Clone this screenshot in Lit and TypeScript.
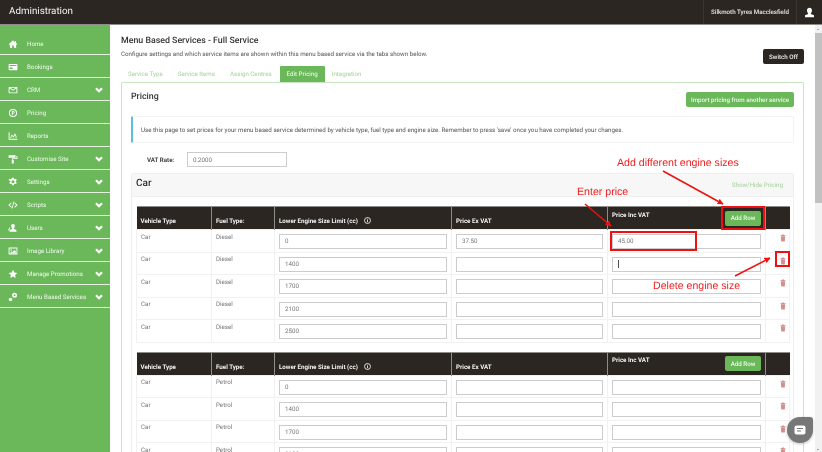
import { LitElement, html, css, svg } from "lit";
import { customElement } from "lit/decorators.js";

const icons: Record<string, unknown> = {
  home: svg`<path d="M8 2 1 8.200l.9 1L3 8.300V14h3.600v-3.600h2.800V14H13V8.300l1.100.9.9-1-2.400-2.100V3h-1.800v2.500z"/>`,
  card: svg`<path fill-rule="evenodd" d="M2 3h12a1 1 0 0 1 1 1v8a1 1 0 0 1-1 1H2a1 1 0 0 1-1-1V4a1 1 0 0 1 1-1zm.5 1.700v1.600h11V4.700zm0 4.200v2.400h5V8.900z"/>`,
  mail: svg`<path fill-rule="evenodd" d="M2 3h12a1 1 0 0 1 1 1v8a1 1 0 0 1-1 1H2a1 1 0 0 1-1-1V4a1 1 0 0 1 1-1zm.5 2v7h11V5L8 9.200zM4 4.500 8 7.600l4-3.100z"/>`,
  pricing: svg`<path fill-rule="evenodd" d="M8 1.500a6.500 6.500 0 1 1 0 13 6.500 6.500 0 0 1 0-13zm0 1.600a4.900 4.900 0 1 0 0 9.800 4.900 4.900 0 0 0 0-9.800z"/><path d="M6.200 11.500V4.800h2.300a2 2 0 0 1 0 4.200H7.600v2.500zM7.600 6v1.800h.8a.9.9 0 0 0 0-1.800z"/>`,
  chart: svg`<path d="M1 2h1.500v10.500H15V14H1z"/><path d="M3.500 11 6 5.500l2.500 3L11 3.500l2.500 4.500v3h-1.300V8.800L11 6.500 9 10.800 6.200 8 4.800 11z"/>`,
  roller: svg`<path d="M1 2h11v4H1zM13 3.400h2v4.400H8V9.500h1.200V15H6V9.500h.6V6.600h7V4.800H13z"/>`,
  cog: svg`<path fill-rule="evenodd" d="M6.700 1h2.600l.4 2 1.200.6 1.900-.9 1.300 2.200-1.600 1.300v1.600l1.600 1.300-1.300 2.200-1.900-.9-1.200.7-.4 1.900H6.700l-.4-2-1.200-.6-1.900.9-1.300-2.200 1.600-1.300V6.200L.9 4.900l1.300-2.200 1.900.9 1.200-.7zM8 5.300a2.400 2.400 0 1 0 0 4.800 2.400 2.400 0 0 0 0-4.800z"/>`,
  code: svg`<path d="M5 3.800 6 5 2.800 8 6 11l-1 1.200L.5 8zM11 3.800 10 5l3.200 3L10 11l1 1.200L15.500 8zM9 2.500h1.300L7 13.500H5.700z"/>`,
  users: svg`<path d="M8 1.500c1.800 0 3 1.300 3 3.300 0 1.500-.6 2.700-1.500 3.400v1.200l4 1.600V14H2.500v-3l4-1.600V8.200C5.600 7.500 5 6.300 5 4.800c0-2 1.200-3.300 3-3.300z"/><path d="M1 13.200V11l2.500-1.200C3 8.500 2.800 7.500 3.200 6.500 2.200 7 1.500 8 1.500 9L.5 10v3.200z"/>`,
  image: svg`<path fill-rule="evenodd" d="M1 2.500h14v11H1zm1.400 1.400v7.800h11.200V3.900z"/><path d="M5 5a1.300 1.300 0 1 1 0 2.600A1.300 1.300 0 0 1 5 5zM3.300 10.800 6 8.500l1.300 1 3-3.200 2.400 2.500v2z"/>`,
  star: svg`<path d="m8 1.200 2.100 4.500 4.900.6-3.600 3.300.9 4.800L8 12.100l-4.300 2.300.9-4.800L1 6.300l4.900-.6z"/>`,
  key: svg`<path fill-rule="evenodd" d="M10.500 1a4 4 0 1 1 0 8 4 4 0 0 1 0-8zm0 2.500a1.500 1.500 0 1 0 0 3 1.500 1.500 0 0 0 0-3z"/><circle cx="4" cy="12" r="2.800"/>`,
};

const nav: [string, string, boolean][] = [
  ["home", "Home", false],
  ["card", "Bookings", false],
  ["mail", "CRM", true],
  ["pricing", "Pricing", false],
  ["chart", "Reports", false],
  ["roller", "Customise Site", true],
  ["cog", "Settings", true],
  ["code", "Scripts", true],
  ["users", "Users", true],
  ["image", "Image Library", true],
  ["star", "Manage Promotions", true],
  ["key", "Menu Based Services", true],
];

const tabs = ["Service Type", "Service Items", "Assign Centres", "Edit Pricing", "Integration"];

type Row = { size: string; ex?: string; inc?: string; caret?: boolean };

const dieselRows: Row[] = [
  { size: "0", ex: "37.50", inc: "45.00" },
  { size: "1400", caret: true },
  { size: "1700" },
  { size: "2100" },
  { size: "2500" },
];
const petrolRows: Row[] = [{ size: "0" }, { size: "1400" }, { size: "1700" }, { size: "2100" }];

const trash = html`<svg class="trash" viewBox="0 0 14 16" aria-hidden="true"><path d="M5 0h4l.6 1.500H13V3.200H1V1.500h3.400zM2 4.200h10l-.7 10.600a1.200 1.200 0 0 1-1.200 1.200H3.900a1.200 1.200 0 0 1-1.200-1.200z"/></svg>`;

@customElement("app-root")
export class AppRoot extends LitElement {
  static styles = css`
    :host { display: block; width: 822px; height: 452px; overflow: hidden; position: relative; background: #fff;
      font-family: Roboto, "Liberation Sans", sans-serif; font-size: 6.200px; color: #666; text-rendering: geometricPrecision; filter: blur(.3px); }
    * { box-sizing: border-box; }
    button { text-rendering: geometricPrecision; white-space: nowrap; }
    .top { height: 25px; background: #2b2622; border-bottom: 1px solid #8f8d8a; display: flex; align-items: stretch; color: #fff; }
    .brand { flex: 1; padding: 0 0 0 9px; font-size: 9.800px; line-height: 24px; color: #f2f2f2; }
    .centre { display: flex; align-items: center; padding: 0 7px; font-size: 6.200px; font-weight: 500; border-left: 1px solid #3a3531; border-right: 1px solid #3a3531; color: #e8e8e8; }
    .user { width: 25px; display: flex; align-items: center; justify-content: center; }
    .user svg { width: 11px; height: 11px; fill: #fff; }
    .body { display: flex; height: 427px; }
    .side { width: 110px; flex: none; background: #6ab85a; padding-top: 7px; color: #fff; }
    .item { height: 23px; border-bottom: 1px solid #e4f3e0; display: flex; align-items: center; padding: 1px 7px 0 8px; font-size: 6.200px; color: #eef8eb; }
    .item .ic { width: 10px; height: 10px; fill: #fff; flex: none; margin-right: 9px; }
    .item span { flex: 1; white-space: nowrap; }
    .item .chev { width: 8px; height: 6px; fill: none; stroke: #fff; stroke-width: 2.200; flex: none; }
    .main { flex: 1; min-width: 0; overflow: hidden; padding: 10px 0 0 11px; }
    .head { display: flex; align-items: flex-end; justify-content: space-between; }
    h1 { margin: 0; font-size: 8.800px; font-weight: 500; color: #333; line-height: 12px; }
    .desc { margin: 2px 0 0; font-size: 6.200px; line-height: 10px; color: #555; white-space: nowrap; }
    .switch { background: #2b2622; color: #f0f0f0; border: 0; border-radius: 2px; width: 41px; height: 15px; font: 500 6.200px Roboto, sans-serif; padding: 0; margin: 0 11px 0 0; position: relative; top: 5px; }
    .tabs { display: flex; margin-top: 7px; height: 16px; }
    .tab { padding: 0 7px; line-height: 16px; font-size: 6.200px; color: #a3d39a; margin-right: 1px; white-space: nowrap; }
    .tab.on { background: #6ab85a; color: #f4fbf2; border-radius: 1px 1px 0 0; margin-right: 0; }
    .panel { width: 683px; border: 1px solid #c9e6c2; border-radius: 1px; padding: 9px 9px 0 9px; height: 400px; }
    .ptop { display: flex; justify-content: space-between; align-items: flex-start; }
    h2 { margin: 0; font-size: 8.800px; font-weight: 500; color: #333; line-height: 10px; }
    .import { background: #6ab85a; color: #eef8eb; border: 0; border-radius: 2px; width: 108px; height: 15px; font: 500 6.200px Roboto, sans-serif; padding: 0; }
    .info { margin-top: 9px; height: 27px; border: 1px solid #f3f3f3; border-left: 2px solid #5bc0de; border-radius: 1px; padding-left: 8px; display: flex; align-items: center; font-size: 6.200px; color: #555; white-space: nowrap; }
    .vat { display: flex; align-items: center; margin-top: 9px; padding-left: 16px; }
    .vat label { width: 40px; font-weight: 700; font-size: 6.200px; color: #444; }
    .in { height: 15px; border: 1px solid #ccc; display: flex; align-items: center; padding-left: 5px; font-size: 6.200px; color: #777; background: #fff; }
    .vat .in { width: 100px; }
    .card { margin-top: 6px; border: 1px solid #eee; border-radius: 2px; }
    .chead { height: 23px; background: #f7f7f7; border-bottom: 1px solid #eee; display: flex; align-items: center; justify-content: space-between; padding: 0 10px 0 4px; }
    .chead b { font-size: 10px; font-weight: 500; color: #333; position: relative; top: -2px; }
    .chead a { font-size: 6.200px; color: #a3d39a; }
    .cbody { padding: 9px 4px 0 4px; }
    table { width: 653px; border-collapse: collapse; table-layout: fixed; margin-bottom: 9px; }
    th { background: #2b2622; color: #f2f2f2; height: 23px; font-size: 6.200px; font-weight: 700; text-align: left; vertical-align: bottom; padding: 0 4px 3px; border-left: 1px solid #8f8d8a; border-top: 1px solid #8f8d8a; line-height: 9px; white-space: nowrap; }
    th:first-child { border-left: 0; }
    th.rowh { padding: 0 4px; vertical-align: middle; }
    .incwrap { display: flex; align-items: center; justify-content: space-between; }
    .incwrap span { position: relative; top: -3px; }
    .add { background: #6ab85a; color: #eef8eb; border: 0; border-radius: 2px; width: 36px; height: 15px; font: 500 6.200px Roboto, sans-serif; padding: 0; }
    .i { display: inline-block; width: 7px; height: 7px; margin-left: 6px; vertical-align: -1px; fill: none; stroke: #f2f2f2; stroke-width: 1; }
    td { height: 22.500px; padding: 4px 4px 2.500px; vertical-align: top; border: 1px solid #f1f1f1; font-size: 6.200px; line-height: 9px; color: #777; }
    td.txt { padding-top: 2.500px; }
    td.ctr { padding: 4px 0 0 14px; }
    td .in { width: 100%; }
    .trash { width: 6px; height: 8px; fill: #d28f8f; display: block; }
    .caret { width: 1px; height: 8px; background: #555; }
    .scroll { width: 7px; flex: none; background: #f1f1f1; position: relative; }
    .scroll i { position: absolute; left: 0; right: 0; top: 8px; height: 170px; background: #c1c1c1; }
    .scroll u { position: absolute; left: 2px; top: 3px; border: 1.500px solid transparent; border-bottom-color: #777; }
    .scroll s { position: absolute; left: 2px; bottom: 1px; border: 1.500px solid transparent; border-top-color: #555; }
    .mark { position: absolute; border: 2px solid #ee1111; }
    .note { position: absolute; color: #f01c1c; font-family: "Liberation Sans", Arial, sans-serif; font-size: 10.600px; white-space: nowrap; line-height: 12px; }
    .arrows { position: absolute; left: 0; top: 0; width: 822px; height: 452px; pointer-events: none; }
    .chat { position: absolute; left: 787px; top: 417px; width: 26px; height: 26px; background: #777; border-radius: 50% 3px 50% 50%; display: flex; align-items: center; justify-content: center; box-shadow: 0 1px 3px rgba(0,0,0,.25); }
    .chat svg { width: 12px; height: 10px; }
  `;

  private table(fuel: string, rows: Row[]) {
    return html`<table>
      <colgroup><col style="width:75px" /><col style="width:63px" /><col style="width:177px" /><col style="width:156px" /><col style="width:158px" /><col style="width:24px" /></colgroup>
      <thead><tr>
        <th>Vehicle Type</th>
        <th>Fuel Type:</th>
        <th>Lower Engine Size Limit (cc)<svg class="i" viewBox="0 0 8 8"><circle cx="4" cy="4" r="3.400" /><path d="M4 3.500v2.500M4 2v1" /></svg></th>
        <th>Price Ex VAT</th>
        <th class="rowh"><div class="incwrap"><span>Price Inc VAT</span><button class="add">Add Row</button></div></th>
        <th></th>
      </tr></thead>
      <tbody>${rows.map(
        (r) => html`<tr>
          <td class="txt">Car</td>
          <td class="txt">${fuel}</td>
          <td><div class="in">${r.size}</div></td>
          <td><div class="in">${r.ex ?? ""}</div></td>
          <td><div class="in">${r.inc ?? ""}${r.caret ? html`<div class="caret"></div>` : ""}</div></td>
          <td class="ctr">${trash}</td>
        </tr>`
      )}</tbody>
    </table>`;
  }

  render() {
    return html`
      <div class="top">
        <div class="brand">Administration</div>
        <div class="centre">Silkmoth Tyres Macclesfield</div>
        <div class="user"><svg viewBox="0 0 16 16"><path d="M8 1c2.300 0 3.600 1.600 3.600 4 0 1.700-.7 3.200-1.700 4v1.200l4.600 1.800V15H1.500v-3L6 10.200V9C5 8.200 4.400 6.700 4.400 5 4.400 2.600 5.700 1 8 1z" /></svg></div>
      </div>
      <div class="body">
        <nav class="side">
          ${nav.map(
            ([ic, label, more]) => html`<div class="item">
              <svg class="ic" viewBox="0 0 16 16">${icons[ic]}</svg>
              <span>${label}</span>
              ${more ? html`<svg class="chev" viewBox="0 0 8 6"><path d="M1 1.200 4 4.200 7 1.200" /></svg>` : ""}
            </div>`
          )}
        </nav>
        <main class="main">
          <div class="head">
            <div>
              <h1>Menu Based Services - Full Service</h1>
              <p class="desc">Configure settings and which service items are shown within this menu based service via the tabs shown below.</p>
            </div>
            <button class="switch">Switch Off</button>
          </div>
          <div class="tabs">${tabs.map((t) => html`<div class="tab ${t === "Edit Pricing" ? "on" : ""}">${t}</div>`)}</div>
          <section class="panel">
            <div class="ptop"><h2>Pricing</h2><button class="import">Import pricing from another service</button></div>
            <div class="info">Use this page to set prices for your menu based service determined by vehicle type, fuel type and engine size. Remember to press 'save' once you have completed your changes.</div>
            <div class="vat"><label>VAT Rate:</label><div class="in">0.2000</div></div>
            <div class="card">
              <div class="chead"><b>Car</b><a>Show/Hide Pricing</a></div>
              <div class="cbody">${this.table("Diesel", dieselRows)}${this.table("Petrol", petrolRows)}</div>
            </div>
          </section>
        </main>
        <div class="scroll"><u></u><i></i><s></s></div>
      </div>

      <svg class="arrows" viewBox="0 0 822 452" aria-hidden="true">
        <defs><marker id="h" markerWidth="4" markerHeight="4" refX="3.600" refY="2" orient="auto"><path d="M0 0 4 2 0 4z" fill="#ee1111" /></marker></defs>
        <g stroke="#ee1111" stroke-width="1.500" fill="none">
          <path d="M663 171 723 204" marker-end="url(#h)" />
          <path d="M585 204 611 226" marker-end="url(#h)" />
          <path d="M735 276 770 258" marker-end="url(#h)" />
        </g>
      </svg>
      <div class="mark" style="left:721px;top:206px;width:44px;height:24px"></div>
      <div class="mark" style="left:610px;top:231px;width:87px;height:20px"></div>
      <div class="mark" style="left:775px;top:251px;width:15px;height:16px"></div>
      <div class="note" style="left:617px;top:157px">Add different engine sizes</div>
      <div class="note" style="left:577px;top:186px">Enter price</div>
      <div class="note" style="left:653px;top:280px">Delete engine size</div>
      <div class="chat"><svg viewBox="0 0 12 10"><rect x=".5" y=".5" width="11" height="9" rx="2" fill="#fff" /><path d="M3 3.500h6M3 6h4" stroke="#777" stroke-width="1" /></svg></div>
    `;
  }
}
